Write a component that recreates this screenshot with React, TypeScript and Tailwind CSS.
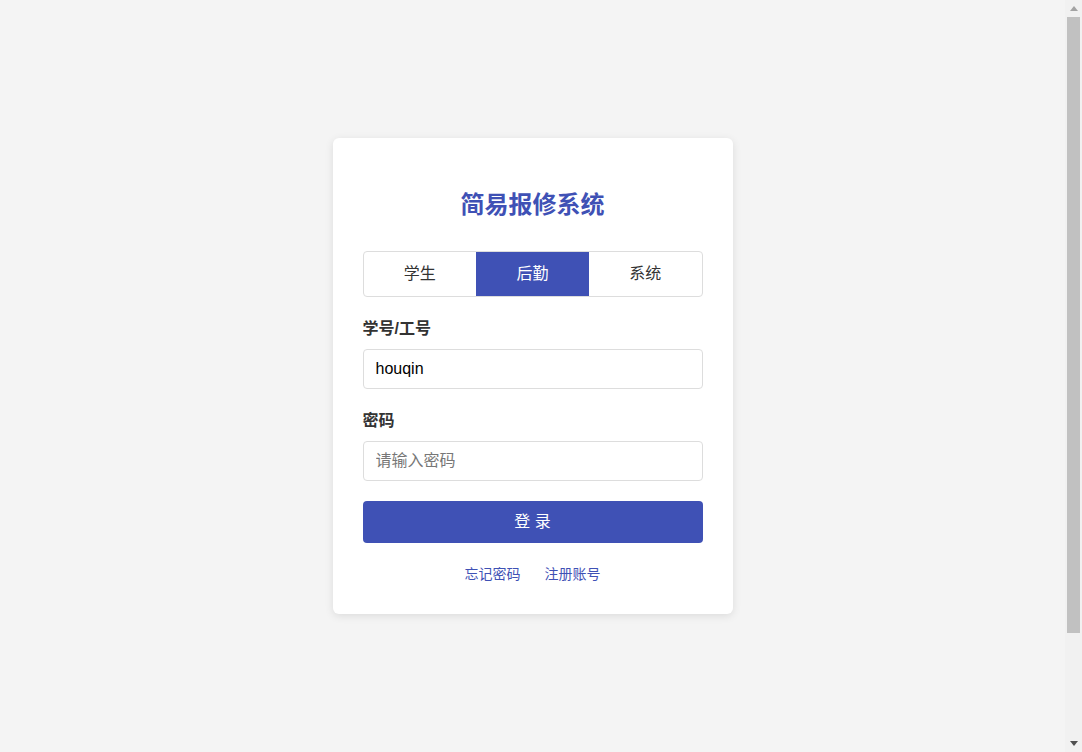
export default function App() {
  const tabs = ["学生", "后勤", "系统"];
  const active = 1;

  return (
    <div
      className="flex h-screen bg-[#f4f4f4] text-[#333] overflow-hidden"
      style={{ fontFamily: '"Liberation Sans", "Noto Sans CJK SC", sans-serif' }}
    >
      <div className="flex-1 flex items-center justify-center">
        <div className="w-[400px] bg-white rounded-md shadow-[0_2px_8px_rgba(0,0,0,0.1)] px-[30px] pt-[48px] pb-[30px]">
          <h2 className="text-center text-[24px] leading-[34px] font-bold text-[#3f51b5] font-['Noto_Sans_CJK_SC',sans-serif]">
            简易报修系统
          </h2>

          {/* role tabs */}
          <div className="mt-[31px] flex h-[46px] border border-[#ddd] rounded overflow-hidden">
            {tabs.map((t, i) => (
              <div
                key={t}
                className={
                  i === active
                    ? "flex-1 flex items-center justify-center text-[16px] bg-[#3f51b5] text-white"
                    : "flex-1 flex items-center justify-center text-[16px] text-[#333]"
                }
              >
                {t}
              </div>
            ))}
          </div>

          <label className="block mt-[20px] text-[16px] leading-[24px] font-bold text-[#333]">学号/工号</label>
          <input
            defaultValue="houqin"
            className="mt-[8px] block w-full h-[40px] px-[12px] border border-[#ddd] rounded text-[16px] text-black outline-none"
          />

          <label className="block mt-[20px] text-[16px] leading-[24px] font-bold text-[#333]">密码</label>
          <input
            type="password"
            placeholder="请输入密码"
            className="mt-[8px] block w-full h-[40px] px-[12px] border border-[#ddd] rounded text-[16px] text-black placeholder:text-[#777] outline-none"
          />

          <button className="mt-[20px] w-full h-[42px] bg-[#3f51b5] text-white text-[16px] rounded">
            登 录
          </button>

          <div className="mt-[21px] flex justify-center gap-[24px] text-[14px] leading-[20px] text-[#3f51b5]">
            <a>忘记密码</a>
            <a>注册账号</a>
          </div>
        </div>
      </div>

      {/* browser scrollbar */}
      <div className="w-[17px] flex flex-col bg-[#f1f1f1]">
        <div className="h-[17px] flex items-center justify-center">
          <svg width="8" height="5" viewBox="0 0 8 5">
            <path d="M4 0L8 5H0z" fill="#a3a3a3" />
          </svg>
        </div>
        <div className="flex-1 px-[2px]">
          <div className="h-[616px] bg-[#c1c1c1]" />
        </div>
        <div className="h-[17px] flex items-center justify-center">
          <svg width="8" height="5" viewBox="0 0 8 5">
            <path d="M0 0H8L4 5z" fill="#505050" />
          </svg>
        </div>
      </div>
    </div>
  );
}
